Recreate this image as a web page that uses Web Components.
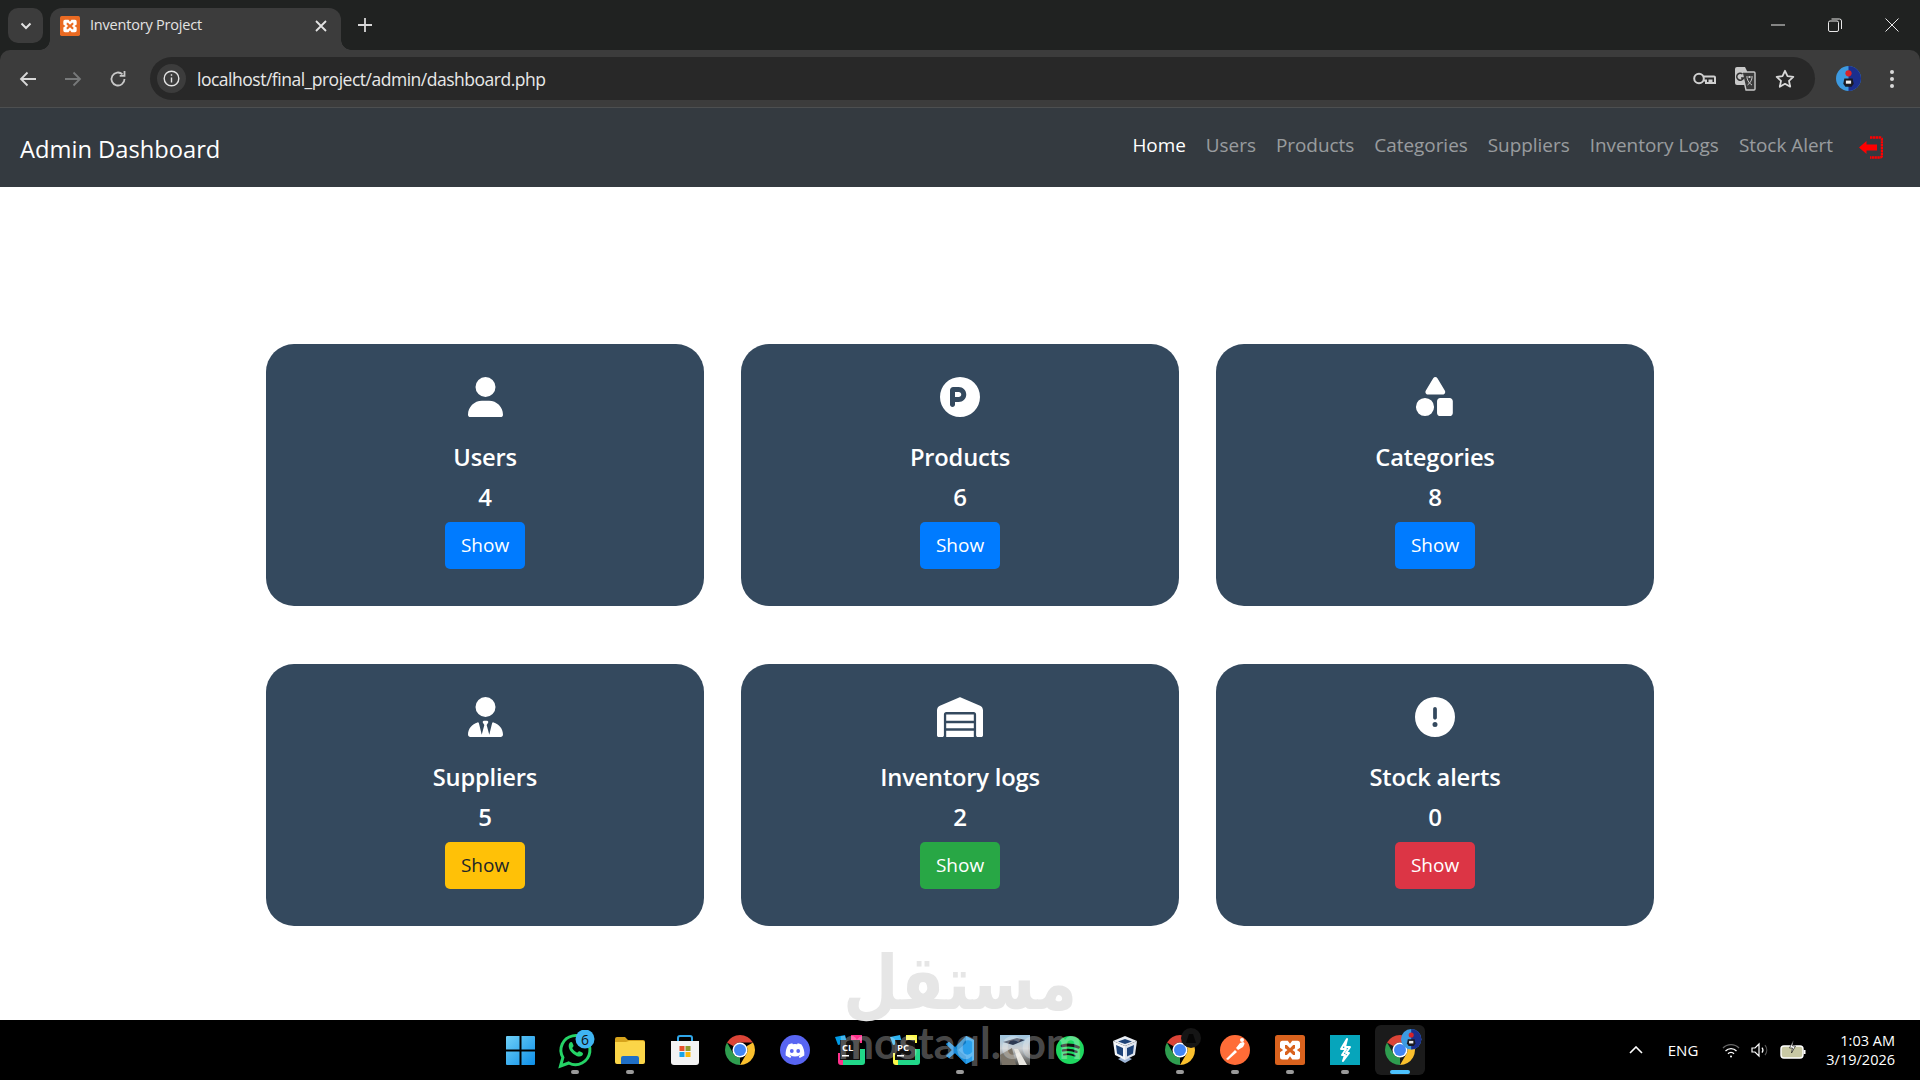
<!DOCTYPE html>
<html lang="en">
<head>
<meta charset="utf-8">
<title>Inventory Project</title>
<style>
    html, body { margin: 0; padding: 0; width: 1920px; height: 1080px; overflow: hidden; background: #fff; }
    body { display: flex; flex-direction: column; position: relative; font-family: "Open Sans", "Noto Sans", sans-serif; }
</style>
</head>
<body>
<browser-chrome title-text="Inventory Project" url="localhost/final_project/admin/dashboard.php"></browser-chrome>
<admin-navbar brand="Admin Dashboard">
    <nav-item active>Home</nav-item>
    <nav-item>Users</nav-item>
    <nav-item>Products</nav-item>
    <nav-item>Categories</nav-item>
    <nav-item>Suppliers</nav-item>
    <nav-item>Inventory Logs</nav-item>
    <nav-item>Stock Alert</nav-item>
</admin-navbar>
<stat-grid>
    <stat-card label="Users" count="4" icon="user" kind="primary"></stat-card>
    <stat-card label="Products" count="6" icon="parking" kind="primary"></stat-card>
    <stat-card label="Categories" count="8" icon="shapes" kind="primary"></stat-card>
    <stat-card label="Suppliers" count="5" icon="tie" kind="warning"></stat-card>
    <stat-card label="Inventory logs" count="2" icon="warehouse" kind="success"></stat-card>
    <stat-card label="Stock alerts" count="0" icon="alert" kind="danger"></stat-card>
</stat-grid>
<win-taskbar></win-taskbar>
<water-mark></water-mark>

<script>
// font awesome style solid icons
const SOLID = {
    user: [448, 'M224 256A128 128 0 1 0 224 0a128 128 0 1 0 0 256zm-45.7 48C79.8 304 0 383.8 0 482.3C0 498.7 13.3 512 29.7 512H418.3c16.4 0 29.7-13.3 29.7-29.7C448 383.8 368.2 304 269.7 304H178.3z'],
    parking: [512, 'M256 512A256 256 0 1 0 256 0a256 256 0 1 0 0 512zM192 256h48c17.7 0 32-14.3 32-32s-14.3-32-32-32H192v64zm48 64H192v32c0 17.7-14.3 32-32 32s-32-14.3-32-32V168c0-22.1 17.9-40 40-40h72c53 0 96 43 96 96s-43 96-96 96z'],
    shapes: [512, 'M260 0c-10 0-20 6-27 16l-96 160c-6 10-6 22 0 32s16 16 28 16h190c11 0 22-6 28-16s6-22 0-32l-96-160c-7-10-17-16-27-16zM322 270H444c22 0 40 18 40 40V460c0 22-18 40-40 40H322c-22 0-40-18-40-40V310c0-22 18-40 40-40zM128 268a116 116 0 1 0 0 232 116 116 0 1 0 0-232z'],
    tie: [448, 'M96 128a128 128 0 1 0 256 0A128 128 0 1 0 96 128zm94.5 200.2l18.6 31L175.8 483.1l-36-146.9c-2-8.1-9.8-13.4-17.9-11.3C51.9 342.4 0 405.8 0 481.3c0 17 13.8 30.7 30.7 30.7H162.5c0 0 0 0 .1 0H168 280h5.5c0 0 0 0 .1 0H417.3c17 0 30.7-13.8 30.7-30.7c0-75.5-51.9-138.9-121.9-156.4c-8.1-2-15.9 3.3-17.9 11.3l-36 146.9L238.9 359.2l18.6-31c6.4-10.7-1.3-24.2-13.7-24.2H224 204.3c-12.4 0-20.1 13.6-13.7 24.2z'],
    warehouse: [640, 'M0 488V171.3c0-26.2 15.9-49.7 40.2-59.4L308.1 4.8c7.6-3.1 16.1-3.1 23.8 0L599.8 111.9c24.3 9.7 40.2 33.3 40.2 59.4V488c0 13.3-10.7 24-24 24H568c-13.3 0-24-10.7-24-24V224c0-17.7-14.3-32-32-32H128c-17.7 0-32 14.3-32 32V488c0 13.3-10.7 24-24 24H24c-13.3 0-24-10.7-24-24zM128 224H512v80H128zM128 336H512v64H128zM128 432H512v80H128z'],
    alert: [512, 'M256 512A256 256 0 1 0 256 0a256 256 0 1 0 0 512zm0-384c13.3 0 24 10.7 24 24V264c0 13.3-10.7 24-24 24s-24-10.7-24-24V152c0-13.3 10.7-24 24-24zM224 352a32 32 0 1 1 64 0 32 32 0 1 1 -64 0z']
};

const xamppMark = (bg, fg) => `
    <rect width="24" height="24" rx="2" fill="${bg}"/>
    <path fill="${fg}" fill-rule="evenodd" d="M6 4.5h4.2L12 7l1.8-2.500H18a2 2 0 0 1 2 2v3.700L17.500 12l2.500 1.800v3.700a2 2 0 0 1-2 2h-4.200L12 17l-1.800 2.500H6a2 2 0 0 1-2-2v-3.700L6.500 12 4 10.200V6.500a2 2 0 0 1 2-2zM8 8v2.500L10 12l-2 1.500V16h1.500l2.500-2.500 2.500 2.500H16v-2.500L14 12l2-1.500V8h-1.500L12 10.500 9.500 8z"/>`;

const chromeMark = `
    <path fill="#db4437" d="M6.680 14A20 20 0 0 1 41.320 14H24A10 10 0 0 0 15.340 19z"/>
    <path fill="#fbc02d" transform="rotate(120 24 24)" d="M6.680 14A20 20 0 0 1 41.320 14H24A10 10 0 0 0 15.340 19z"/>
    <path fill="#2e9d4f" transform="rotate(240 24 24)" d="M6.680 14A20 20 0 0 1 41.320 14H24A10 10 0 0 0 15.340 19z"/>
    <circle cx="24" cy="24" r="10" fill="#fff"/>
    <circle cx="24" cy="24" r="8" fill="#4285f4"/>`;

const avatarMark = `
    <circle cx="12" cy="12" r="12" fill="#3d9ae0"/>
    <path d="M12 0a12 12 0 0 1 0 24z" fill="#1b2f8e"/>
    <circle cx="12" cy="7" r="3" fill="#d8232a"/>
    <path d="M8 12h8l1 5-2 3H9l-2-3z" fill="#1a1a22"/>
    <rect x="9.500" y="14" width="5" height="3" fill="#eee"/>`;

function jetbrains(letters, a, b, c) {
    return `<svg viewBox="0 0 30 30" width="30" height="30">
        <path fill="${c}" d="M0 2l10-2 2 8-9 2z"/><path fill="${b}" d="M16 0h11v8H16zM3 18h7v12H6a3 3 0 0 1-3-3z"/>
        <path fill="${a}" d="M22 14h8v13a3 3 0 0 1-3 3H8v-6z"/>
        <rect x="5" y="5" width="20" height="20" fill="#111"/>
        <text x="7" y="16" font-family="Open Sans, sans-serif" font-weight="700" font-size="9.500" fill="#fff">${letters}</text>
        <rect x="7" y="20" width="7" height="1.500" fill="#fff"/></svg>`;
}

const TASK_ICONS = {
    start: `<svg viewBox="0 0 29 29" width="29" height="29"><defs><linearGradient id="w" x1="0" y1="0" x2="1" y2="1"><stop offset="0" stop-color="#6fd0f7"/><stop offset="1" stop-color="#0d8fe8"/></linearGradient></defs><path fill="url(#w)" d="M0 1a1 1 0 0 1 1-1h12.500v13.500H0zM15.500 0H28a1 1 0 0 1 1 1v12.500H15.500zM0 15.500h13.500V29H1a1 1 0 0 1-1-1zM15.500 15.500H29V28a1 1 0 0 1-1 1H15.500z"/></svg>`,
    whatsapp: `<svg viewBox="0 0 40 40" width="40" height="40"><g transform="translate(1.500 0)"><path fill="none" stroke="#25d366" stroke-width="3" d="M4 36l2.400-8.600A14.500 14.500 0 1 1 12.300 33z"/><path fill="#25d366" d="M13 13c1-1.500 2.500-1.500 3 0l1 2.500c.3.800-.8 1.800-1.300 2.500 1 2 2.800 3.700 5 4.700.7-.6 1.500-1.800 2.300-1.500l2.700 1.300c1.300.7.800 2.300-.3 3.300-2 1.500-5 .8-8.500-1.800-3.700-2.800-6-7.500-3.900-11z"/></g><circle cx="30" cy="9" r="9.500" fill="#3fb4f2"/><text x="30" y="14.500" text-anchor="middle" font-family="Open Sans, sans-serif" font-size="14" fill="#111">6</text></svg>`,
    folder: `<svg viewBox="0 0 30 27" width="30" height="27"><path fill="#d6a31c" d="M0 2a2 2 0 0 1 2-2h8l3 3h15a2 2 0 0 1 2 2v3H0z"/><path fill="#fbd548" d="M0 5h11l3-1h14a2 2 0 0 1 2 2v19a2 2 0 0 1-2 2H2a2 2 0 0 1-2-2z"/><path fill="#1f6fc6" d="M6 21a2 2 0 0 1 2-2h14a2 2 0 0 1 2 2v6H6z"/></svg>`,
    store: `<svg viewBox="0 0 30 30" width="30" height="30"><path fill="none" stroke="#2fa6e8" stroke-width="2" d="M8 8V3a2 2 0 0 1 2-2h10a2 2 0 0 1 2 2v5"/><path fill="#f3f3f3" d="M1 6h28v21a3 3 0 0 1-3 3H4a3 3 0 0 1-3-3z"/><rect x="9.500" y="11" width="5" height="5" fill="#e8502a"/><rect x="15.500" y="11" width="5" height="5" fill="#8f9a2c"/><rect x="9.500" y="17" width="5" height="5" fill="#19a4e8"/><rect x="15.500" y="17" width="5" height="5" fill="#fbb90c"/></svg>`,
    chrome: `<svg viewBox="4 4 40 40" width="30" height="30">${chromeMark}</svg>`,
    discord: `<svg viewBox="0 0 30 30" width="30" height="30"><circle cx="15" cy="15" r="15" fill="#5865f2"/><path fill="#fff" d="M21.500 9.500a15 15 0 0 0-3.800-1.200l-.5 1a14 14 0 0 0-4.400 0l-.5-1a15 15 0 0 0-3.800 1.200C6 13.300 5.400 17 5.700 20.600a15 15 0 0 0 4.600 2.300l1-1.500-1.600-.8.400-.3a11 11 0 0 0 9.800 0l.4.300-1.600.8 1 1.500a15 15 0 0 0 4.600-2.300c.4-4.200-.7-7.800-2.800-11.100z"/><circle cx="11.800" cy="16" r="1.900" fill="#5865f2"/><circle cx="18.200" cy="16" r="1.900" fill="#5865f2"/></svg>`,
    clion: jetbrains('CL', '#21d789', '#ff318c', '#009ae5'),
    pycharm: jetbrains('PC', '#21d789', '#fcf84a', '#2fb4f0'),
    vscode: `<svg viewBox="0 0 30 30" width="30" height="30"><path fill="#0f7cc4" d="M21 1l8 4v20l-8 4-11-11-6 5-3-2 6-6-6-6 3-2 6 5z"/><path fill="#2ba0ec" d="M21 1l8 4v20l-8 4zM21 8l-8 7 8 7z" fill-rule="evenodd"/><path fill="#1a8ad6" d="M1 9l3-2 17 15v7L10 18l-6 5-3-2 6-6z"/></svg>`,
    game: `<svg viewBox="0 0 30 30" width="30" height="30"><defs><linearGradient id="g" x1="0" y1="0" x2="0" y2="1"><stop offset="0" stop-color="#9cc3de"/><stop offset=".45" stop-color="#c9cdd0"/><stop offset="1" stop-color="#4d4c48"/></linearGradient></defs><rect width="30" height="30" fill="url(#g)"/><path fill="#2d3a52" d="M3 7l14-4 8 2-12 5z"/><path fill="#7b7468" d="M0 20l12-7 4 17H2z"/><path fill="#e8e6e0" d="M14 14l4 0 9 16h-8z"/></svg>`,
    spotify: `<svg viewBox="0 0 30 30" width="28" height="28"><circle cx="15" cy="15" r="15" fill="#1ed760"/><g fill="none" stroke="#111" stroke-linecap="round"><path stroke-width="3" d="M6.500 10.500c6-1.500 12-1 17.500 1.500"/><path stroke-width="2.500" d="M7.500 15.500c5-1.200 10-.7 14.500 1.500"/><path stroke-width="2" d="M8.500 20c4-1 8-.6 11.500 1.200"/></g></svg>`,
    vbox: `<svg viewBox="0 0 30 30" width="30" height="30"><path fill="#9fb6d6" d="M8 24l7 4 7-4-7-3z"/><path fill="#e9edf3" d="M15 1l12 5-12 5L3 6z"/><path fill="#1e4378" d="M15 4l7 2.500-7 2.500-7-2.500z"/><path fill="#f5f7fa" d="M3 6l12 5v14L5 20z"/><path fill="#dfe5ee" d="M27 6L15 11v14l10-5z"/><path fill="#1e4378" d="M6 10l7 3v8.500l-6-3zM24 10l-7 3v8.500l6-3z"/></svg>`,
    chromeDark: `<svg viewBox="0 0 44 44" width="44" height="44"><g transform="translate(4 4) scale(.75)">${chromeMark}</g><circle cx="33" cy="10" r="10" fill="#151515"/><path d="M28 15l3-9h4l3 9z" fill="#050505"/></svg>`,
    postman: `<svg viewBox="0 0 30 30" width="30" height="30"><circle cx="15" cy="15" r="15" fill="#ff6c37"/><path fill="#fff" d="M6 24l9-9 2 2-9 8zM16 13l4-5 3-1a2 2 0 0 1 1 3l-1 2-5 3zM20 5a2 2 0 1 1 4 0 2 2 0 0 1-4 0z"/></svg>`,
    xampp: `<svg viewBox="0 0 24 24" width="30" height="30">${xamppMark('#d9621d', '#fff')}</svg>`,
    bolt: `<svg viewBox="0 0 30 30" width="30" height="30"><rect width="30" height="30" fill="#06a5bb"/><path fill="none" stroke="#fff" stroke-width="2" stroke-linejoin="round" d="M17 4l-6 10h5l-4 6h3l-2 6 6-8h-3l4-6h-5z"/></svg>`,
    chromeMe: `<svg viewBox="0 0 44 44" width="44" height="44"><g transform="translate(4 4) scale(.75)">${chromeMark}</g><g transform="translate(23 1) scale(.85)">${avatarMark}</g></svg>`
};

class BrowserChrome extends HTMLElement {
    constructor() {
        super();
        this.attachShadow({ mode: 'open' });
    }

    connectedCallback() {
        const title = this.getAttribute('title-text');
        const url = this.getAttribute('url');
        this.shadowRoot.innerHTML = `
            <style>
                :host { display: block; background: #202221; color: #e3e3e3; font-family: "Open Sans", sans-serif; flex: none; }
                svg { display: block; }
                .strip { height: 50px; display: flex; align-items: flex-end; padding-left: 8px; box-sizing: border-box; }
                .expand { width: 35px; height: 35px; margin-bottom: 7px; border-radius: 10px; background: #3c3c3c; display: flex; align-items: center; justify-content: center; }
                .tab { position: relative; width: 291px; height: 42px; margin-left: 7px; background: #3c3c3c; border-radius: 12px 12px 0 0; display: flex; align-items: center; padding: 0 14px 0 10px; box-sizing: border-box; gap: 10px; }
                .tab::before, .tab::after { content: ""; position: absolute; bottom: 0; width: 10px; height: 10px; background: radial-gradient(circle at var(--c) 0, #202221 9.500px, #3c3c3c 10px); }
                .tab::before { left: -10px; --c: 0; }
                .tab::after { right: -10px; --c: 100%; }
                .tab span { flex: 1; font-size: 14.500px; letter-spacing: -.2px; white-space: nowrap; padding-bottom: 9px; }
                .tab svg { margin-bottom: 6px; }
                .new { margin: 0 0 5px 12px; width: 24px; height: 40px; display: flex; align-items: center; justify-content: center; }
                .win { margin-left: auto; align-self: flex-start; display: flex; }
                .win div { width: 57px; height: 50px; display: flex; align-items: center; justify-content: center; }
                .toolbar { background: #3c3c3c; border-radius: 10px 10px 0 0; border-bottom: 1px solid #4d4f50; height: 57px; display: flex; align-items: center; padding: 0 10px; }
                .nav { width: 36px; height: 36px; display: flex; align-items: center; justify-content: center; margin-right: 9px; flex: none; }
                .pill { flex: 1; height: 43px; margin: 0 15px 0 5px; background: #282828; border-radius: 22px; display: flex; align-items: center; padding: 0 18px 0 7px; }
                .info { width: 29px; height: 29px; border-radius: 50%; background: #3c3c3c; display: flex; align-items: center; justify-content: center; flex: none; }
                .url { margin-left: 11px; flex: 1; font-size: 17.500px; letter-spacing: -.49px; color: #e8e8e8; white-space: nowrap; }
                .tools { display: flex; gap: 16.500px; }
                .tools div, .end { width: 24px; height: 24px; display: flex; align-items: center; justify-content: center; }
                .end { width: 36px; height: 36px; flex: none; }
                .end + .end { margin-left: 8px; }
            </style>
            <div class="strip">
                <div class="expand"><svg width="12" height="8" viewBox="0 0 12 8"><path d="M1.500 1.500L6 6l4.500-4.500" fill="none" stroke="#e3e3e3" stroke-width="2"/></svg></div>
                <div class="tab">
                    <svg viewBox="0 0 24 24" width="20" height="20">${xamppMark('#ea6a22', '#fff')}</svg>
                    <span>${title}</span>
                    <svg width="12" height="12" viewBox="0 0 12 12"><path d="M1 1l10 10M11 1L1 11" stroke="#e3e3e3" stroke-width="1.800"/></svg>
                </div>
                <div class="new"><svg width="14" height="14" viewBox="0 0 14 14"><path d="M7 0v14M0 7h14" stroke="#d8d8d8" stroke-width="1.800"/></svg></div>
                <div class="win">
                    <div><svg width="14" height="2" viewBox="0 0 14 2"><path d="M0 1h14" stroke="#e8e8e8" stroke-width="1"/></svg></div>
                    <div><svg width="14" height="14" viewBox="0 0 14 14" fill="none" stroke="#e8e8e8"><rect x=".5" y="3" width="10" height="10.500" rx="1.500"/><path d="M3.500 1h8a2 2 0 0 1 2 2v8"/></svg></div>
                    <div><svg width="14" height="14" viewBox="0 0 14 14"><path d="M.5.5l13 13M13.500.5l-13 13" stroke="#e8e8e8"/></svg></div>
                </div>
            </div>
            <div class="toolbar">
                <div class="nav"><svg width="18" height="16" viewBox="0 0 18 16" fill="none" stroke="#d8d8d8" stroke-width="1.800"><path d="M17 8H2M8.500 1.500L2 8l6.500 6.500"/></svg></div>
                <div class="nav"><svg width="18" height="16" viewBox="0 0 18 16" fill="none" stroke="#77797a" stroke-width="1.800"><path d="M1 8h15M9.500 1.500L16 8l-6.500 6.500"/></svg></div>
                <div class="nav"><svg width="18" height="18" viewBox="0 0 18 18" fill="none" stroke="#c8c8c8" stroke-width="1.800"><path d="M15.500 9A6.500 6.500 0 1 1 13.500 4.300"/><path d="M15.500 1v4.800h-4.800" /></svg></div>
                <div class="pill">
                    <div class="info"><svg width="17" height="17" viewBox="0 0 17 17" fill="none" stroke="#e3e3e3" stroke-width="1.400"><circle cx="8.500" cy="8.500" r="7.300"/><path d="M8.500 7.500v5M8.500 4.200v1.600"/></svg></div>
                    <div class="url">${url}</div>
                    <div class="tools">
                        <div><svg width="23" height="13" viewBox="0 0 23 13" fill="none" stroke="#d0d0d0" stroke-width="2"><circle cx="6" cy="6.500" r="4.800"/><path d="M10.800 4.500H21a1 1 0 0 1 1 1V11h-3.500V8.500h-2V11H13V8.500h-2.200"/></svg></div>
                        <div><svg width="22" height="24" viewBox="0 0 22 24"><path fill="#c8c8c8" d="M1 2a2 2 0 0 1 2-2h8l2 4v14H3a2 2 0 0 1-2-2z"/><path fill="#3a3a3a" stroke="#c8c8c8" stroke-width="1.400" d="M8 5h12a1 1 0 0 1 1 1v16a1 1 0 0 1-1 1h-8z"/><path d="M8.500 7A3.500 3.500 0 1 0 9.500 11H7" fill="none" stroke="#333" stroke-width="1.500"/><path d="M12 10h7M15.500 9v2M13 11c1 4 3 6 5 7M18 11c-.6 3-2 5-4.500 7" fill="none" stroke="#c8c8c8"/></svg></div>
                        <div><svg width="20" height="20" viewBox="0 0 20 20"><path fill="none" stroke="#d8d8d8" stroke-width="1.800" stroke-linejoin="round" d="M10 1.800l2.500 5.400 5.800.7-4.300 4 1.200 5.800L10 14.800l-5.200 2.900L6 11.900l-4.300-4 5.800-.7z"/></svg></div>
                    </div>
                </div>
                <div class="end"><svg viewBox="0 0 24 24" width="25" height="25">${avatarMark}</svg></div>
                <div class="end"><svg width="4" height="18" viewBox="0 0 4 18" fill="#d8d8d8"><circle cx="2" cy="2" r="2"/><circle cx="2" cy="9" r="2"/><circle cx="2" cy="16" r="2"/></svg></div>
            </div>
        `;
    }
}
customElements.define('browser-chrome', BrowserChrome);

class NavItem extends HTMLElement {
    constructor() {
        super();
        this.attachShadow({ mode: 'open' }).innerHTML = `
            <style>
                :host { display: block; font-size: 18.900px; color: rgba(255, 255, 255, .5); white-space: nowrap; }
                :host([active]) { color: #fff; }
            </style>
            <slot></slot>
        `;
    }
}
customElements.define('nav-item', NavItem);

class AdminNavbar extends HTMLElement {
    constructor() {
        super();
        this.attachShadow({ mode: 'open' });
    }

    connectedCallback() {
        this.shadowRoot.innerHTML = `
            <style>
                :host { display: flex; flex: none; align-items: center; height: 79px; background: #343a40; padding: 0 37px 0 20px; box-sizing: border-box; font-family: "Open Sans", sans-serif; }
                .brand { font-size: 23.700px; color: #fff; padding-top: 3px; white-space: nowrap; }
                nav { margin-left: auto; display: flex; gap: 20px; padding-bottom: 6px; }
                svg { display: block; margin-left: 26px; }
            </style>
            <div class="brand">${this.getAttribute('brand')}</div>
            <nav><slot></slot></nav>
            <svg viewBox="0 0 24 24" width="24" height="24" fill="#f00">
                <path d="M0 11.500L7.500 5v3.500H18v6H7.500V18z"/>
                <path d="M11 1.500H21a2 2 0 0 1 2 2v16a2 2 0 0 1-2 2H11" fill="none" stroke="#f00" stroke-width="2.400" stroke-dasharray="2.400 .5"/>
            </svg>
        `;
    }
}
customElements.define('admin-navbar', AdminNavbar);

class StatGrid extends HTMLElement {
    constructor() {
        super();
        this.attachShadow({ mode: 'open' }).innerHTML = `
            <style>
                :host { display: grid; flex: 1; grid-template-columns: repeat(3, 438px); grid-auto-rows: 262px; gap: 58px 37px; justify-content: center; padding-top: 157px; box-sizing: border-box; min-height: 0; }
            </style>
            <slot></slot>
        `;
    }
}
customElements.define('stat-grid', StatGrid);

const BUTTON_KINDS = {
    primary: ['#007bff', '#fff'],
    warning: ['#ffc107', '#212529'],
    success: ['#28a745', '#fff'],
    danger: ['#dc3545', '#fff']
};

class StatCard extends HTMLElement {
    constructor() {
        super();
        this.attachShadow({ mode: 'open' });
    }

    connectedCallback() {
        const [w, d] = SOLID[this.getAttribute('icon')];
        const [bg, fg] = BUTTON_KINDS[this.getAttribute('kind')];
        const width = this.getAttribute('icon') === 'warehouse' ? 46 : Math.round(w / 512 * 40);
        this.shadowRoot.innerHTML = `
            <style>
                :host { display: flex; flex-direction: column; align-items: center; background: #34495e; border-radius: 28px; padding-top: 33px; box-sizing: border-box; color: #fff; font-family: "Open Sans", sans-serif; }
                svg { display: block; }
                h5 { margin: 25px 0 0; font-size: 23.700px; line-height: 30px; font-weight: 600; letter-spacing: -.2px; }
                .count { margin-top: 10px; font-size: 24px; line-height: 30px; font-weight: 600; }
                .btn { margin-top: 10px; width: 80px; height: 47px; border-radius: 5px; background: ${bg}; color: ${fg}; font-size: 19px; display: flex; align-items: center; justify-content: center; padding-bottom: 1px; box-sizing: border-box; }
            </style>
            <svg viewBox="0 0 ${w} 512" width="${width}" height="40" preserveAspectRatio="none" fill="#fff" fill-rule="evenodd"><path d="${d}"/></svg>
            <h5>${this.getAttribute('label')}</h5>
            <div class="count">${this.getAttribute('count')}</div>
            <div class="btn">Show</div>
        `;
    }
}
customElements.define('stat-card', StatCard);

class TaskIcon extends HTMLElement {
    constructor() {
        super();
        this.attachShadow({ mode: 'open' });
    }

    connectedCallback() {
        this.shadowRoot.innerHTML = `
            <style>
                :host { display: flex; position: relative; width: 50px; height: 50px; align-items: center; justify-content: center; border-radius: 6px; }
                :host([current]) { background: #1b1b1b; }
                svg { display: block; flex: none; }
                .dot { position: absolute; bottom: 1px; left: 21px; width: 8px; height: 4px; border-radius: 2px; background: #9a9a9a; }
                :host([current]) .dot { left: 15px; width: 20px; background: #4cc2ff; }
            </style>
            ${TASK_ICONS[this.getAttribute('name')]}
            ${this.hasAttribute('dot') || this.hasAttribute('current') ? '<div class="dot"></div>' : ''}
        `;
    }
}
customElements.define('task-icon', TaskIcon);

class WinTaskbar extends HTMLElement {
    constructor() {
        super();
        this.attachShadow({ mode: 'open' });
    }

    connectedCallback() {
        const pinned = [
            ['start'], ['whatsapp', 1], ['folder', 1], ['store'], ['chrome'], ['discord'],
            ['clion'], ['pycharm'], ['vscode', 1], ['game'], ['spotify'], ['vbox'],
            ['chromeDark', 1], ['postman', 1], ['xampp', 1], ['bolt', 1]
        ];
        const icons = pinned.map(([name, dot]) => `<task-icon name="${name}" ${dot ? 'dot' : ''}></task-icon>`).join('');
        this.shadowRoot.innerHTML = `
            <style>
                :host { display: grid; flex: none; grid-template-columns: 1fr auto 1fr; align-items: center; height: 60px; background: #000; color: #fff; font-family: "Open Sans", sans-serif; }
                .pins { grid-column: 2; display: flex; gap: 5px; }
                .tray { display: flex; align-items: center; justify-content: flex-end; padding-right: 25px; font-size: 14.500px; }
                .tray svg { display: block; flex: none; }
                .eng { margin: 0 24px 0 25px; font-size: 15px; }
                .clock { margin-left: 20px; text-align: right; line-height: 19px; white-space: nowrap; }
            </style>
            <div></div>
            <div class="pins">${icons}<task-icon name="chromeMe" current></task-icon></div>
            <div class="tray">
                <svg width="14" height="8" viewBox="0 0 14 8"><path d="M1 7l6-6 6 6" fill="none" stroke="#fff" stroke-width="1.600"/></svg>
                <span class="eng">ENG</span>
                <svg width="18" height="15" viewBox="0 0 18 15" fill="none" stroke="#fff" stroke-width="1.300"><path d="M1 5a11 11 0 0 1 16 0" stroke="#666"/><path d="M3.500 8a7.500 7.500 0 0 1 11 0"/><path d="M6 10.800a4 4 0 0 1 6 0"/><circle cx="9" cy="13.500" r="1" fill="#fff" stroke="none"/></svg>
                <svg style="margin-left:11px" width="20" height="16" viewBox="0 0 20 16" fill="none" stroke="#fff" stroke-width="1.200"><path d="M1 6v4h3l4 4V2L4 6z"/><path d="M11 5.500a4 4 0 0 1 0 5"/><path d="M14 3a8 8 0 0 1 0 10" stroke="#555"/></svg>
                <svg style="margin-left:9px" width="26" height="20" viewBox="0 0 26 20"><rect x="1" y="6" width="22" height="12" rx="3" fill="#c8c8a4" stroke="#fff" stroke-width="1.400"/><rect x="23.500" y="10" width="2" height="4" fill="#fff"/><path d="M13.500 0l-4 8h3l-1 5 4-7h-3z" fill="#fff" stroke="#000" stroke-width=".6"/></svg>
                <div class="clock"><div>1:03 AM</div><div>3/19/2026</div></div>
            </div>
        `;
    }
}
customElements.define('win-taskbar', WinTaskbar);

// image watermark of the site the screenshot was taken from
class WaterMark extends HTMLElement {
    constructor() {
        super();
        this.attachShadow({ mode: 'open' }).innerHTML = `
            <style>
                :host { position: absolute; left: 845px; top: 948px; width: 230px; display: flex; flex-direction: column; align-items: center; pointer-events: none; }
                .ar { font-family: "DejaVu Sans", sans-serif; font-weight: 700; font-size: 64px; line-height: 70px; color: #e6e6e6; white-space: nowrap; transform: scaleY(1.18); }
                .en { font-family: "Lato", sans-serif; font-weight: 700; font-size: 43px; line-height: 44px; color: rgba(255, 255, 255, .3); margin-top: 3px; white-space: nowrap; }
            </style>
            <div class="ar" lang="ar" dir="rtl">مستقل</div>
            <div class="en">mostaql.com</div>
        `;
    }
}
customElements.define('water-mark', WaterMark);
</script>
</body>
</html>
